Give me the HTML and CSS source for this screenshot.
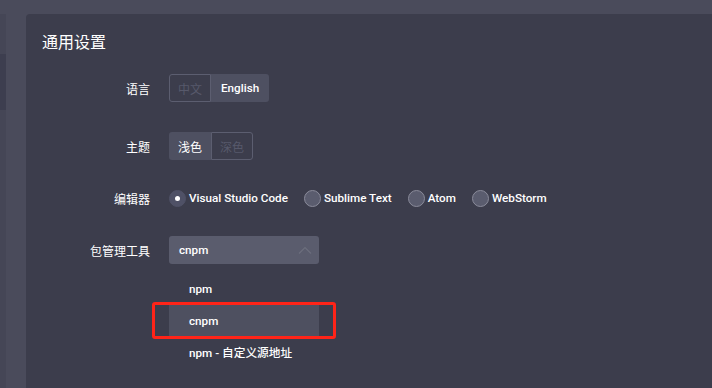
FILE: index.html
```html
<!DOCTYPE html>
<html lang="zh">
<head>
<meta charset="utf-8">
<title>通用设置</title>
<link rel="stylesheet" href="styles.css">
</head>
<body>
<div class="topbar"></div>
<div class="main">
  <aside class="side">
    <div class="side-edge"><div class="side-mark"></div></div>
    <div class="side-fill"></div>
  </aside>
  <section class="panel">
    <h2 class="title">通用设置</h2>
    <div class="form">
      <div class="row row-lang">
        <label class="label">语言</label>
        <div class="btn-group">
          <span class="seg seg-off">中文</span>
          <span class="seg seg-on latin">English</span>
        </div>
      </div>
      <div class="row">
        <label class="label">主题</label>
        <div class="btn-group">
          <span class="seg seg-on">浅色</span>
          <span class="seg seg-off">深色</span>
        </div>
      </div>
      <div class="row">
        <label class="label">编辑器</label>
        <div class="radios latin">
          <span class="radio checked"><i class="dot"></i>Visual Studio Code</span>
          <span class="radio"><i class="dot"></i>Sublime Text</span>
          <span class="radio"><i class="dot"></i>Atom</span>
          <span class="radio"><i class="dot"></i>WebStorm</span>
        </div>
      </div>
      <div class="row">
        <label class="label">包管理工具</label>
        <div class="select latin">
          <div class="select-box">
            <span>cnpm</span>
            <svg class="caret" width="14" height="8" viewBox="0 0 14 8"><path d="M1 7.5 L7 1.5 L13 7.5" fill="none" stroke="#6c6e7d" stroke-width="1.2"/></svg>
          </div>
          <ul class="menu">
            <li class="item">npm</li>
            <li class="item active">cnpm</li>
            <li class="item">npm - 自定义源地址</li>
          </ul>
          <div class="mark"></div>
        </div>
      </div>
    </div>
  </section>
</div>
</body>
</html>
```
FILE: styles.css
```css
* { box-sizing: border-box; }
html, body { margin: 0; padding: 0; }
body {
  width: 712px;
  height: 388px;
  overflow: hidden;
  background: #4a4b5b;
  font-family: "Roboto", "Noto Sans CJK SC", sans-serif;
  font-size: 12px;
  color: #ffffff;
  display: flex;
  flex-direction: column;
}
.latin { font-size: 11.7px; font-weight: 500; }
.topbar { height: 14px; flex: none; background: #4a4b5b; }
.main { flex: 1; display: flex; min-height: 0; }
.side { width: 26px; flex: none; display: flex; }
.side-edge { width: 6px; background: #454656; padding-top: 40px; }
.side-mark { height: 56px; background: #3d3e4f; }
.side-fill { flex: 1; background: #4a4b5b; }
.panel {
  flex: 1;
  background: #3c3d4c;
  border-top-left-radius: 4px;
  padding: 18px 0 0 16px;
}
.title {
  margin: 0;
  font-size: 16px;
  font-weight: normal;
  line-height: 22px;
  color: #ffffff;
}
.form { margin-top: 20px; display: flex; flex-direction: column; gap: 24px; }
.row { display: flex; align-items: center; height: 28px; }
.row-lang { margin-bottom: 6px; }
.label {
  width: 108px;
  margin-right: 19px;
  text-align: right;
  color: #ffffff;
}
.btn-group { display: flex; height: 28px; }
.seg {
  display: flex;
  align-items: center;
  padding: 0 8px;
  height: 28px;
  border: 1px solid transparent;
}
.seg.latin { padding: 0 9px; }
.seg:first-child { border-radius: 3px 0 0 3px; }
.seg:last-child { border-radius: 0 3px 3px 0; }
.seg-on { background: #4e5061; color: #ffffff; }
.seg-off { border-color: #5c5e70; color: #57596b; }
.radios { display: flex; align-items: center; gap: 16px; }
.radio { display: flex; align-items: center; gap: 3px; color: #ffffff; }
.dot {
  width: 17px;
  height: 17px;
  border-radius: 50%;
  background: #5a5c6e;
  border: 1px solid #8a8b9a;
  display: flex;
  align-items: center;
  justify-content: center;
}
.radio.checked .dot { background: #4f5166; border-color: #4f5166; }
.radio.checked .dot::after {
  content: "";
  width: 5px;
  height: 5px;
  border-radius: 50%;
  background: #ffffff;
}
.select { position: relative; width: 150px; }
.select-box {
  height: 28px;
  background: #5a5c6d;
  border-radius: 3px;
  display: flex;
  align-items: center;
  justify-content: space-between;
  padding: 0 7px 0 10px;
}
.caret { display: block; }
.menu {
  position: absolute;
  left: 0;
  top: 37px;
  width: 150px;
  margin: 0;
  padding: 0;
  list-style: none;
}
.item {
  height: 32px;
  line-height: 32px;
  padding-left: 20px;
  color: #ffffff;
  white-space: nowrap;
}
.item.active { background: #4e5060; }
.mark {
  position: absolute;
  left: -17px;
  top: 66px;
  width: 184px;
  height: 37px;
  border: 3px solid #ff2418;
  border-radius: 3px;
}
```
